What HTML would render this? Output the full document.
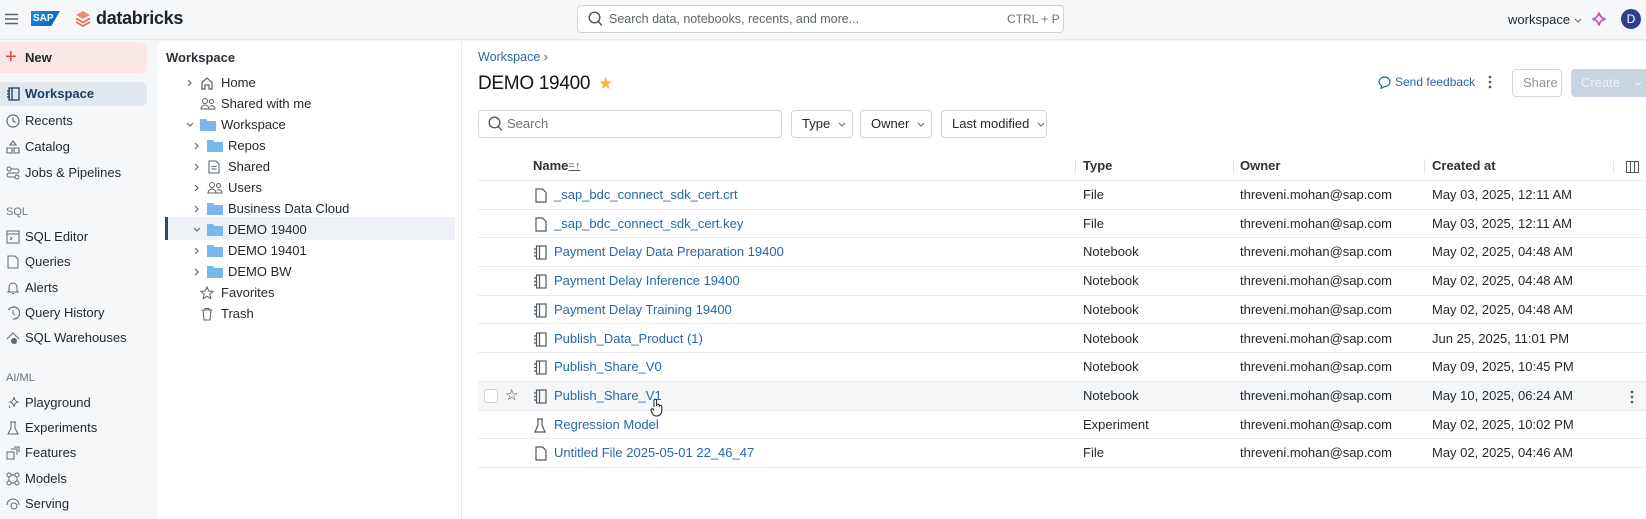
<!DOCTYPE html>
<html><head><meta charset="utf-8"><style>
*{box-sizing:border-box;margin:0;padding:0}
body{width:1646px;height:519px;overflow:hidden;font-family:"Liberation Sans",sans-serif;font-size:13px;color:#1f272d;background:#f6f7f9;position:relative}
.a{position:absolute;white-space:nowrap}
.top{left:0;top:0;width:1646px;height:40px;background:#f6f7f9;border-bottom:1px solid #e6e8eb}
.side{left:0;top:41px;width:157px;height:478px;background:#f6f7f9}
.si{left:0;width:147px;height:24px;line-height:24px;padding-left:25px}
.si svg{position:absolute;left:6px;top:5px}
.sec{left:6px;font-size:11px;color:#6b7580}
.tree{left:158px;top:41px;width:304px;height:478px;background:#fff;border-top-left-radius:6px;border-right:1px solid #e6e8eb}
.main{left:462px;top:41px;width:1184px;height:478px;background:#fff}
.tr{height:21px;line-height:21px}
.btn{border:1px solid #d1d7dd;border-radius:4px;background:#fff;height:28px;line-height:26px;padding:0 10px}
.btn svg{margin-left:8px;vertical-align:middle}
.row{left:478px;width:1168px;height:28.7px;border-bottom:1px solid #e8eaed}
.row span{position:absolute;top:0;line-height:28px}
.lk{color:#2568a8}
.hd{font-weight:bold;color:#2c343b}
</style></head><body>
<div class="a top"></div>
<svg class="a" style="left:5px;top:13px" width="13" height="12"><path d="M0 1.5h13M0 6h13M0 10.5h13" stroke="#5a636d" stroke-width="1.5"/></svg>
<div class="a" style="left:31px;top:11px;width:29px;height:15px;background:linear-gradient(135deg,#1b8ee0,#0a5fb4);clip-path:polygon(0 0,100% 0,70% 100%,0 100%);color:#fff;font-weight:bold;font-size:10px;line-height:15px;padding-left:2px">SAP</div>
<svg class="a" style="left:75px;top:10px" width="16" height="17"><path d="M8 1l7 4-7 4-7-4z" fill="#f08a6a"/><path d="M1 8.5l7 4 7-4M1 12l7 4 7-4" stroke="#e9664a" stroke-width="1.6" fill="none"/></svg>
<div class="a" style="left:96px;top:8px;font-size:18px;font-weight:bold;color:#1e2328;letter-spacing:-0.3px">databricks</div>
<div class="a" style="left:577px;top:5px;width:487px;height:28px;border:1px solid #cdd3d9;border-radius:4px;background:#fff"></div>
<svg class="a" style="left:588px;top:11px" width="15" height="16"><circle cx="6.5" cy="6.5" r="5.3" stroke="#4b545c" stroke-width="1.4" fill="none"/><path d="M10.3 10.5l3.5 4" stroke="#4b545c" stroke-width="1.4"/></svg>
<div class="a" style="left:609px;top:12px;color:#5b646c;font-size:12.5px">Search data, notebooks, recents, and more...</div>
<div class="a" style="left:1007px;top:12px;color:#6b747c;font-size:12px">CTRL + P</div>
<div class="a" style="left:1508px;top:12px;font-size:13px">workspace <svg width="8" height="6" style="vertical-align:middle"><path d="M1 1l3 3 3-3" fill="none" stroke="#666"/></svg></div>
<svg class="a" style="left:1591px;top:11px" width="16" height="16"><path d="M8 1.5Q9 7 14.5 8Q9 9 8 14.5Q7 9 1.5 8Q7 7 8 1.5z" fill="none" stroke="#d44fb0" stroke-width="1.8"/></svg>
<div class="a" style="left:1621px;top:9px;width:20px;height:20px;border-radius:50%;background:#2f3d8f;color:#fff;font-size:12px;line-height:20px;text-align:center">D</div>

<div class="a side"></div>
<div class="a" style="left:0;top:42px;width:147px;height:31px;background:#fbe8e6;border-radius:0 6px 6px 0"></div>
<div class="a" style="left:5px;top:48px;color:#e0443a;font-size:20px;line-height:18px">+</div>
<div class="a" style="left:25px;top:50px;font-weight:bold;font-size:13px">New</div>
<div class="a si" style="top:82px;background:#e2e8f0;border-radius:0 5px 5px 0;color:#1c3f66;font-weight:bold"><svg width="14" height="14"><rect x="3" y="1" width="10" height="12" fill="none" stroke="#1c3f66" stroke-width="1.3"/><path d="M6 1v12M1 4h3M1 7h3M1 10h3" stroke="#1c3f66" stroke-width="1.3"/></svg>Workspace</div>
<div class="a si" style="top:109px"><svg width="14" height="14"><circle cx="7" cy="7" r="6" fill="none" stroke="#5f6870" stroke-width="1.2"/><path d="M7 3.5V7l2.5 1.5" stroke="#5f6870" stroke-width="1.2" fill="none"/></svg>Recents</div>
<div class="a si" style="top:135px"><svg width="14" height="14"><path d="M7 1l3 4H4zM1 8h5v5H1zM8 8h5v5H8z" fill="none" stroke="#5f6870" stroke-width="1.1"/></svg>Catalog</div>
<div class="a si" style="top:161px"><svg width="14" height="14"><circle cx="3" cy="3" r="2" fill="none" stroke="#5f6870"/><circle cx="11" cy="11" r="2" fill="none" stroke="#5f6870"/><path d="M5 3h6a2 2 0 010 4H3a2 2 0 000 4h6" fill="none" stroke="#5f6870"/></svg>Jobs &amp; Pipelines</div>
<div class="a sec" style="top:206px">SQL</div>
<div class="a si" style="top:225px"><svg width="14" height="14"><rect x="1" y="1" width="12" height="12" fill="none" stroke="#5f6870"/><path d="M1 4h12M4 7l2 1.5L4 10" fill="none" stroke="#5f6870"/></svg>SQL Editor</div>
<div class="a si" style="top:250px"><svg width="14" height="14"><path d="M2 1h7l3 3v9H2z" fill="none" stroke="#5f6870"/></svg>Queries</div>
<div class="a si" style="top:276px"><svg width="14" height="14"><path d="M3 10V6a4 4 0 018 0v4l1 1H2zM6 12.5h2" fill="none" stroke="#5f6870"/></svg>Alerts</div>
<div class="a si" style="top:301px"><svg width="14" height="14"><path d="M2.5 4A6 6 0 117 13" fill="none" stroke="#5f6870" stroke-width="1.2"/><path d="M7 4v3.5l2 1.5" fill="none" stroke="#5f6870"/></svg>Query History</div>
<div class="a si" style="top:326px"><svg width="14" height="14"><path d="M1 8l6-6 6 6" fill="none" stroke="#5f6870"/><circle cx="8" cy="10" r="3" fill="#5f6870"/></svg>SQL Warehouses</div>
<div class="a sec" style="top:372px">AI/ML</div>
<div class="a si" style="top:391px"><svg width="14" height="14"><path d="M8 1Q8.5 5 12 6Q8.5 7 8 11Q7.5 7 4 6Q7.5 5 8 1zM3 10l1 2" fill="none" stroke="#5f6870"/></svg>Playground</div>
<div class="a si" style="top:416px"><svg width="14" height="14"><path d="M5 1v6L2 13h10L9 7V1M4 1h6" fill="none" stroke="#5f6870"/></svg>Experiments</div>
<div class="a si" style="top:441px"><svg width="14" height="14"><rect x="1" y="6" width="7" height="7" fill="none" stroke="#5f6870"/><path d="M5 3h6v6M8 1h5v5" fill="none" stroke="#5f6870"/></svg>Features</div>
<div class="a si" style="top:467px"><svg width="14" height="14"><circle cx="3" cy="3" r="2" fill="none" stroke="#5f6870"/><circle cx="11" cy="3" r="2" fill="none" stroke="#5f6870"/><circle cx="3" cy="11" r="2" fill="none" stroke="#5f6870"/><circle cx="11" cy="11" r="2" fill="none" stroke="#5f6870"/><path d="M5 3h4M3 5v4M11 5v4M5 11h4" stroke="#5f6870"/></svg>Models</div>
<div class="a si" style="top:492px"><svg width="14" height="14"><path d="M1 8a6 6 0 0112 0" fill="none" stroke="#5f6870"/><circle cx="8" cy="9" r="3" fill="none" stroke="#5f6870"/></svg>Serving</div>

<div class="a tree"></div>
<div class="a" style="left:166px;top:50px;font-weight:bold;color:#2a3138">Workspace</div>
<div class="a" style="left:165px;top:217px;width:290px;height:23px;background:#eef2f7"></div>
<div class="a" style="left:165px;top:217px;width:3px;height:23px;background:#2c4a6e"></div>
<div id="tree"></div>

<div class="a main"></div>
<div class="a lk" style="left:478px;top:50px;font-size:12.5px">Workspace <span style="color:#666">&#8250;</span></div>
<div class="a" style="left:478px;top:73px;font-size:19px;color:#11171c;letter-spacing:-0.3px">DEMO 19400</div>
<div class="a" style="left:598px;top:74px;color:#f2b73c;font-size:17px">&#9733;</div>
<svg class="a" style="left:1378px;top:76px" width="13" height="13"><path d="M6.5 1a5.5 4.8 0 110 9.6L3 12.5l.8-2.6A5.5 4.8 0 016.5 1z" fill="none" stroke="#2568a8" stroke-width="1.2"/></svg>
<div class="a lk" style="left:1395px;top:75px;font-size:12px">Send feedback</div>
<svg class="a" style="left:1488px;top:75px" width="4" height="14"><circle cx="2" cy="2" r="1.3" fill="#555"/><circle cx="2" cy="7" r="1.3" fill="#555"/><circle cx="2" cy="12" r="1.3" fill="#555"/></svg>
<div class="a btn" style="left:1512px;top:69px;width:50px;height:28px;color:#8a949d">Share</div>
<div class="a" style="left:1571px;top:69px;width:75px;height:28px;border-radius:4px 0 0 4px;background:#c9d4e0;color:#eef2f6;line-height:28px;padding-left:10px">Create <svg width="8" height="6" style="margin-left:10px;vertical-align:middle"><path d="M1 1l3 3 3-3" fill="none" stroke="#eef2f6"/></svg></div>

<div class="a btn" style="left:478px;top:110px;width:304px;color:#6b737b;padding-left:28px">Search</div>
<svg class="a" style="left:488px;top:116px" width="15" height="16"><circle cx="6.5" cy="6.5" r="5.3" stroke="#4b545c" stroke-width="1.3" fill="none"/><path d="M10.3 10.5l3.5 4" stroke="#4b545c" stroke-width="1.3"/></svg>
<div class="a btn" style="left:791px;top:110px;width:62px">Type<svg width="8" height="6"><path d="M1 1l3 3 3-3" fill="none" stroke="#666"/></svg></div>
<div class="a btn" style="left:860px;top:110px;width:72px">Owner<svg width="8" height="6"><path d="M1 1l3 3 3-3" fill="none" stroke="#666"/></svg></div>
<div class="a btn" style="left:941px;top:110px;width:106px">Last modified<svg width="8" height="6"><path d="M1 1l3 3 3-3" fill="none" stroke="#666"/></svg></div>

<div class="a row" style="top:152px;height:29px"><span class="hd" style="left:55px">Name <span style="font-weight:normal;color:#555;text-decoration:underline;font-size:11px">=&#8593;</span></span><span class="hd" style="left:605px">Type</span><span class="hd" style="left:762px">Owner</span><span class="hd" style="left:954px">Created at</span>
<i class="a" style="left:597px;top:7px;width:1px;height:15px;background:#e2e5e8"></i><i class="a" style="left:755px;top:7px;width:1px;height:15px;background:#e2e5e8"></i><i class="a" style="left:946px;top:7px;width:1px;height:15px;background:#e2e5e8"></i><i class="a" style="left:1135px;top:7px;width:1px;height:15px;background:#e2e5e8"></i>
<svg class="a" style="left:1148px;top:9px" width="13" height="12"><rect x=".5" y=".5" width="12" height="11" fill="none" stroke="#555"/><path d="M4.5 0v12M8.5 0v12" stroke="#555"/></svg></div>
<div id="rows"></div>
<svg class="a" style="left:650px;top:398px" width="14" height="19"><path d="M4 9V2.5a1.3 1.3 0 012.6 0V8M6.6 7.5a1.3 1.3 0 012.6 0V9M9.2 8.5a1.3 1.3 0 012.6 0v4.5a5 5 0 01-5 5H6a4 4 0 01-3.5-2.2L1 12.5a1.3 1.3 0 012.2-1.3L4 12.5" fill="#fff" stroke="#222" stroke-width="1"/></svg>

<script>
var folder='<svg width="16" height="13"><path d="M0 1h6l1.5 2H16v10H0z" fill="#7ab6ee"/></svg>';
var ppl='<svg width="16" height="14"><circle cx="5" cy="4" r="2.5" fill="none" stroke="#55606a"/><circle cx="11.5" cy="4.5" r="2" fill="none" stroke="#55606a"/><path d="M1 12a4 4 0 018 0zM9.5 12h5.5a3 3 0 00-5-2.5" fill="none" stroke="#55606a"/></svg>';
var T=[["Home",186,0,'<svg width="14" height="14"><path d="M2 6.5L7 2l5 4.5V13H9V9H5v4H2z" fill="none" stroke="#55606a" stroke-width="1.2"/></svg>'],
["Shared with me",0,0,ppl],["Workspace",-186,0,folder],["Repos",193,1,folder],
["Shared",193,1,'<svg width="14" height="14"><path d="M2 1h7l3 3v9H2zM4.5 6.5h5M4.5 9h5" fill="none" stroke="#55606a"/></svg>'],
["Users",193,1,ppl],["Business Data Cloud",193,1,folder],["DEMO 19400",-193,1,folder],["DEMO 19401",193,1,folder],["DEMO BW",193,1,folder],
["Favorites",0,0,'<svg width="14" height="14"><path d="M7 1l1.8 4 4.2.4-3.2 2.8 1 4.3L7 10.3 3.2 12.5l1-4.3L1 5.4l4.2-.4z" fill="none" stroke="#55606a"/></svg>'],
["Trash",0,0,'<svg width="14" height="14"><path d="M1.5 3h11M5 3V1.5h4V3M3 3l1 10h6l1-10" fill="none" stroke="#55606a"/></svg>']];
var h='';T.forEach(function(t,i){var y=72+i*21;var c=t[1];var ix=t[2]?207:200,tx=t[2]?228:221;
if(c>0)h+='<svg class="a" style="left:'+(c+1)+'px;top:'+(y+7)+'px" width="6" height="8"><path d="M1 1l3 3-3 3" fill="none" stroke="#5f6b76" stroke-width="1.2"/></svg>';
if(c<0)h+='<svg class="a" style="left:'+(-c)+'px;top:'+(y+8)+'px" width="8" height="6"><path d="M1 1l3 3 3-3" fill="none" stroke="#5f6b76" stroke-width="1.2"/></svg>';
h+='<div class="a" style="left:'+ix+'px;top:'+(y+4)+'px">'+t[3]+'</div>';
h+='<div class="a tr" style="left:'+tx+'px;top:'+y+'px">'+t[0]+'</div>';});
document.getElementById('tree').innerHTML=h;
var fi='<svg width="12" height="15"><path d="M1 1h6.5L11 4.5V14H1z" fill="none" stroke="#4f5961" stroke-width="1.2"/></svg>';
var nb='<svg width="14" height="15"><rect x="3.5" y="1" width="9.5" height="13" fill="none" stroke="#4f5961" stroke-width="1.2"/><path d="M6.5 1v13M1 4h3M1 7.5h3M1 11h3" stroke="#4f5961" stroke-width="1.2"/></svg>';
var ex='<svg width="14" height="15"><path d="M5 1v6L2 14h10L9 7V1M4 1h6" fill="none" stroke="#4f5961" stroke-width="1.2"/></svg>';
var R=[["_sap_bdc_connect_sdk_cert.crt","File",fi,"May 03, 2025, 12:11 AM"],["_sap_bdc_connect_sdk_cert.key","File",fi,"May 03, 2025, 12:11 AM"],
["Payment Delay Data Preparation 19400","Notebook",nb,"May 02, 2025, 04:48 AM"],["Payment Delay Inference 19400","Notebook",nb,"May 02, 2025, 04:48 AM"],
["Payment Delay Training 19400","Notebook",nb,"May 02, 2025, 04:48 AM"],["Publish_Data_Product (1)","Notebook",nb,"Jun 25, 2025, 11:01 PM"],
["Publish_Share_V0","Notebook",nb,"May 09, 2025, 10:45 PM"],["Publish_Share_V1","Notebook",nb,"May 10, 2025, 06:24 AM"],
["Regression Model","Experiment",ex,"May 02, 2025, 10:02 PM"],["Untitled File 2025-05-01 22_46_47","File",fi,"May 02, 2025, 04:46 AM"]];
var r='';R.forEach(function(x,i){var y=181+i*28.7;var hv=i==7;
r+='<div class="a row" style="top:'+y+'px;'+(hv?'background:#f5f6f7':'')+'">';
if(hv)r+='<i class="a" style="left:6px;top:7px;width:14px;height:14px;border:1px solid #cfd4d9;border-radius:3px;background:#fff"></i><span style="left:27px;font-size:15px;color:#444">&#9734;</span><svg class="a" style="left:1152px;top:8px" width="4" height="14"><circle cx="2" cy="2" r="1.3" fill="#555"/><circle cx="2" cy="7" r="1.3" fill="#555"/><circle cx="2" cy="12" r="1.3" fill="#555"/></svg>';
r+='<i class="a" style="left:'+(x[2]==fi?57:55)+'px;top:7px">'+x[2]+'</i><span class="lk" style="left:76px">'+x[0]+'</span><span style="left:605px">'+x[1]+'</span><span style="left:762px">threveni.mohan@sap.com</span><span style="left:954px">'+x[3]+'</span></div>';});
document.getElementById('rows').innerHTML=r;
</script>
</body></html>
